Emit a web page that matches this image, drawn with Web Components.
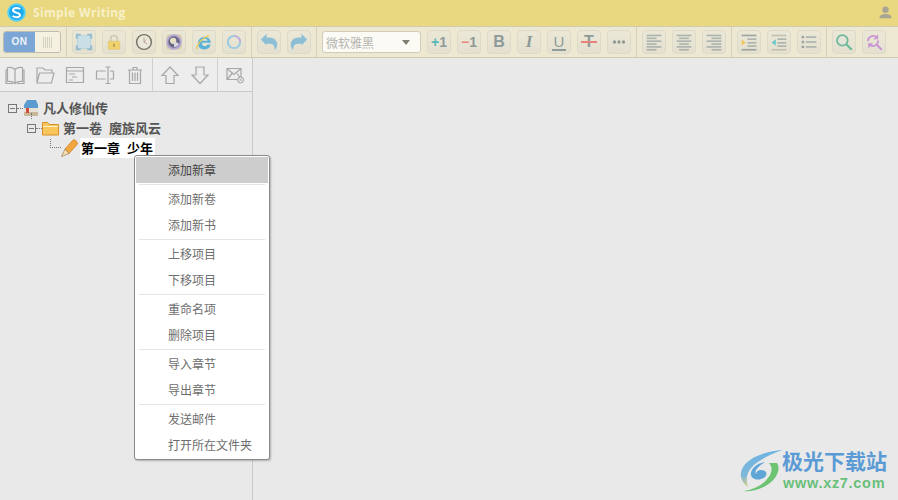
<!DOCTYPE html>
<html>
<head>
<meta charset="utf-8">
<style>
  html, body { margin: 0; height: 100%; background: #e9e9e9; overflow: hidden; }
  sw-app { font-family: "Liberation Sans", "Noto Sans CJK SC", sans-serif; }
</style>
</head>
<body>
<sw-app>
  <sw-titlebar slot="title">Simple Writing</sw-titlebar>
  <sw-toolbar slot="toolbar"></sw-toolbar>
  <sw-sidebar slot="side"></sw-sidebar>
  <sw-menu slot="over"></sw-menu>
  <sw-watermark slot="over"></sw-watermark>
</sw-app>
<script>
const line = 'fill="none" stroke="#a5a8a5" stroke-width="1.2"';
const bar = (y, x, w, c) => `<rect x="${x}" y="${y}" width="${w}" height="2" fill="${c || '#9fa9a6'}"/>`;
const ICONS = {
  full: `<rect x="3" y="3" width="16" height="16" fill="#c3deeb"/><path d="M3 3h16v16H3z" fill="none" stroke="#8fbdd6" stroke-dasharray="1 1"/><path d="M1 1h6v2.500H3.500V7H1zM15 1h6v6h-2.500V3.500H15zM1 15h2.500v3.500H7V21H1zM18.500 15H21v6h-6v-2.500h3.500z" fill="#86b5d0"/>`,
  lock: `<path d="M7 11V7a4 4 0 0 1 8 0v4" fill="none" stroke="#c9c3a8" stroke-width="2"/><rect x="4" y="10" width="14" height="10" rx="1" fill="#f3cf5a" stroke="#d8b444" stroke-width=".6"/><rect x="10" y="13" width="2" height="4" fill="#a8862a"/>`,
  clock: `<circle cx="11" cy="11" r="9" fill="#eeeadb" stroke="#5f5c53" stroke-width="1.800"/><path d="M11 11V5.500M11 11l4 2.500" stroke="#8a877d" stroke-width="1"/><path d="M11 11l3-3" stroke="#d26a5c" stroke-width=".7"/>`,
  media: `<rect x="1.500" y="1.500" width="19" height="19" rx="3" fill="#d9cfa4"/><circle cx="11" cy="11" r="9.500" fill="#a99bd6"/><circle cx="11" cy="11" r="7" fill="#4f4c72"/><circle cx="10" cy="9.500" r="3.800" fill="#e8e1c4"/><path d="M11 11.500a6 6 0 0 1 6 1.500 6 6 0 0 1-6 4z" fill="#d5d6e6"/>`,
  ie: `<path d="M3.500 13a8 8 0 1 1 16-1H8.800a3.400 3.400 0 0 0 6.400 2.200h4A8 8 0 0 1 3.500 13zm5.300-3.500h6.600a3.400 3.400 0 0 0-6.600 0z" fill="#3fa8d8" fill-rule="evenodd"/><path d="M2.500 20c-1.500-3 4-13 15-17" fill="none" stroke="#efc83f" stroke-width="1.600"/>`,
  ring: `<circle cx="11" cy="11" r="7.500" fill="none" stroke="#86c4e4" stroke-width="2.400"/><path d="M11 3.500a7.500 7.500 0 0 1 7.500 7.500" fill="none" stroke="#bba6dc" stroke-width="2.400"/>`,
  undo: `<path d="M1 8l7-7v4.500h3.500c6 0 9.500 4 9.500 8.500 0 3-1.300 5.500-3 7.500.6-5-1.600-8.500-6-8.500H8V15z" fill="#79b8d6"/>`,
  redo: `<path d="M21 8l-7-7v4.500h-3.500c-6 0-9.500 4-9.500 8.500 0 3 1.300 5.500 3 7.500-.6-5 1.600-8.500 6-8.500H14V15z" fill="#79b8d6"/>`,
  more: `<circle cx="5.500" cy="11" r="2" fill="#7f8785"/><circle cx="11" cy="11" r="2" fill="#7f8785"/><circle cx="16.500" cy="11" r="2" fill="#7f8785"/>`,
  left: [2,5.500,9,12.500,16,19.500].map((y,i)=>bar(y,2,i%2?12:18)).join(''),
  center: [2,5.500,9,12.500,16,19.500].map((y,i)=>bar(y,i%2?5:2,i%2?12:18)).join(''),
  right: [2,5.500,9,12.500,16,19.500].map((y,i)=>bar(y,i%2?8:2,i%2?12:18)).join(''),
  indent: bar(2,2,18,'#8c9694')+bar(6.500,9,11)+bar(11,9,11)+bar(15,9,11)+bar(19.500,2,18,'#8c9694')+`<path d="M2 7.500l5 4-5 4z" fill="#f0c14a"/>`,
  outdent: bar(2,2,18,'#b9b7a6')+bar(6.500,9,11)+bar(11,9,11)+bar(15,9,11)+bar(19.500,2,18,'#b9b7a6')+`<path d="M7 7.500l-5 4 5 4z" fill="#4cc0c8"/>`,
  list: `<rect x="2" y="3.500" width="3" height="3" fill="#8c9694"/><rect x="2" y="9.500" width="3" height="3" fill="#8c9694"/><rect x="2" y="15.500" width="3" height="3" fill="#8c9694"/>`+bar(4,7,13)+bar(10,7,13)+bar(16,7,13),
  find: `<circle cx="9" cy="9" r="6.500" fill="#e4e6da" stroke="#55b08f" stroke-width="2.200"/><path d="M14 14l6.500 6.500" stroke="#55b08f" stroke-width="2.800"/>`,
  replace: `<path d="M3.500 10a6.500 6.500 0 0 1 11-4.500M16 9a6.500 6.500 0 0 1-11 5" fill="none" stroke="#c485d4" stroke-width="2.200"/><path d="M16 1.500v6h-6zM4 18.500v-6h6z" fill="#c485d4"/><path d="M14 14l6.500 6.500" stroke="#c485d4" stroke-width="2.400"/>`,
  book: `<path d="M10 4.500C8 2.500 5 2 2.500 2.500v14c2.500-.5 5.500 0 7.500 2 2-2 5-2.500 7.500-2v-14C15 2 12 2.500 10 4.500zv14M2.500 5H1v13.500h7M17.500 5H19v13.500h-7" ${line}/>`,
  folder: `<path d="M2 18V3h6l2 2h7v3M2 18l2.500-10H19l-2.500 10z" ${line}/>`,
  panel: `<path d="M1.500 2.500h17v15h-17zM1.500 6h17M4 9h6M7 12h5M4 15h4" ${line}/>`,
  rename: `<path d="M10.500 6H1.500v8h9M15 6h3.500v8H15M10.500 2h5M10.500 18.500h5M13 2v16.500" ${line}/>`,
  trash: `<path d="M3 5h14M8 5V2.500h4V5M4.500 5v13.500h11V5M7.500 7.500v8.500M10 7.500v8.500M12.500 7.500v8.500" ${line}/>`,
  up: `<path d="M10 2L18 10.500h-4v8H6v-8H2z" ${line}/>`,
  down: `<path d="M10 18.500L18 10h-4V2H6v8H2z" ${line}/>`,
  mail: `<path d="M2 3.500h14v11H2zM2 3.500l7 6 7-6M2 14.500l5-6M16 14l-4-5.500" ${line}/><circle cx="15.500" cy="15" r="3" fill="#e9e9e9" stroke="#a3a6a3"/><path d="M14 13.500l3 3M17 13.500l-3 3" stroke="#a3a6a3" stroke-width=".8"/>`
};

class SwApp extends HTMLElement {
  constructor() {
    super();
    this.attachShadow({ mode: "open" });
  }
  connectedCallback() {
    this.shadowRoot.innerHTML = `
      <style>
        :host { display: flex; flex-direction: column; position: relative; width: 898px; height: 500px; overflow: hidden; }
        .body { flex: 1; display: flex; min-height: 0; }
        .main { flex: 1; background: #e9e9e9; }
      </style>
      <slot name="title"></slot>
      <slot name="toolbar"></slot>
      <div class="body">
        <slot name="side"></slot>
        <div class="main"></div>
      </div>
      <slot name="over"></slot>
    `;
  }
}

class SwTitlebar extends HTMLElement {
  constructor() {
    super();
    this.attachShadow({ mode: "open" });
  }
  connectedCallback() {
    this.shadowRoot.innerHTML = `
      <style>
        :host { display: flex; align-items: center; height: 26px; box-sizing: border-box; background: #e9d87f; padding: 0 5px 1px 7px; }
        .name { margin-left: 7px; font: bold 12px "Open Sans", sans-serif; letter-spacing: .35px; color: #f7f0c8; flex: 1; }
        svg { display: block; }
      </style>
      <svg width="19" height="19" viewBox="0 0 19 19">
        <circle cx="9.500" cy="9.500" r="9.300" fill="#4fd0f6"/>
        <circle cx="9.500" cy="9.500" r="7.300" fill="#1fa9ea"/>
        <path d="M13 6.200C12 4.800 6.500 4.300 6 7.200c-.4 2.800 7.200 2 7 5-.2 2.600-6 2.500-7.300.6" fill="none" stroke="#fff" stroke-width="2"/>
      </svg>
      <span class="name"><slot></slot></span>
      <svg width="15" height="15" viewBox="0 0 16 16"><circle cx="8" cy="5" r="3.400" fill="#a9a594"/><path d="M1.500 14c0-3.500 3-4.500 6.500-4.500s6.500 1 6.500 4.500z" fill="#a9a594"/></svg>
    `;
  }
}

class SwBtn extends HTMLElement {
  constructor() {
    super();
    this.attachShadow({ mode: "open" });
  }
  connectedCallback() {
    const icon = ICONS[this.getAttribute("icon")] || "";
    this.shadowRoot.innerHTML = `
      <style>
        :host { display: flex; align-items: center; justify-content: center; position: relative; box-sizing: border-box; width: 24px; height: 24px; border: 1px solid #dedac8; border-radius: 4px; background: linear-gradient(#ece8d8, #e3e0d0); font: bold 14px "Liberation Sans", sans-serif; color: #8e9a98; }
        svg { display: block; width: 18px; height: 18px; opacity: .82; }
      </style>
      ${icon ? `<svg viewBox="0 0 22 22">${icon}</svg>` : ""}<slot></slot>
    `;
  }
}

class SwToolbar extends HTMLElement {
  constructor() {
    super();
    this.attachShadow({ mode: "open" });
  }
  connectedCallback() {
    const btns = (list) => list.map((n) => `<sw-btn icon="${n}"></sw-btn>`).join("");
    this.shadowRoot.innerHTML = `
      <style>
        :host { display: flex; align-items: center; height: 32px; box-sizing: border-box; background: #ede8d1; border-top: 1px solid #cfcab2; border-bottom: 1px solid #cfcab2; font-family: "Noto Sans CJK SC", sans-serif; }
        .g { display: flex; align-items: center; gap: 6px; height: 100%; padding: 0 5px; border-right: 1px solid #d3cfb9; }
        .g:first-child { padding-right: 6px; }
        .g:last-child { border-right: 0; }
        .toggle { display: flex; width: 58px; height: 22px; box-sizing: border-box; margin-left: -2px; border: 1px solid #bdbcae; border-radius: 3px; overflow: hidden; }
        .on { width: 31px; background: #7ba6d6; color: #eef3f7; font: bold 10px/20px "Liberation Sans", sans-serif; letter-spacing: .5px; text-align: center; }
        .off { flex: 1; background: #f4f1e3; display: flex; align-items: center; justify-content: center; }
        .off i { width: 9px; height: 11px; background: repeating-linear-gradient(90deg, #d5d2c0 0 1px, transparent 1px 2px); }
        .sel { display: flex; align-items: center; justify-content: space-between; box-sizing: border-box; width: 99px; height: 22px; padding: 0 10px 0 3px; border: 1px solid #cfccb9; border-radius: 3px; background: #fbfaf5; font-size: 12px; color: #b5b5b0; }
        .sel i { width: 0; height: 0; border: 4px solid transparent; border-top: 5px solid #817e72; border-bottom: 0; }
        .plus { color: #56b7b4; }
        .minus { color: #e8887c; }
        .bold { font: bold 16px "Liberation Sans", sans-serif; }
        .ital { font: italic bold 17px "Liberation Serif", serif; }
        .und { font: 15px/15px "Liberation Sans", sans-serif; border-bottom: 2px solid #8e9a98; padding: 0 2px; }
        .str { font: bold 16px "Liberation Sans", sans-serif; }
        .str::after { content: ""; position: absolute; left: 3px; right: 3px; top: 10px; height: 2px; background: #e8827a; }
      </style>
      <div class="g"><div class="toggle"><div class="on">ON</div><div class="off"><i></i></div></div></div>
      <div class="g">${btns(["full","lock","clock","media","ie","ring"])}</div>
      <div class="g">${btns(["undo","redo"])}</div>
      <div class="g">
        <div class="sel">微软雅黑<i></i></div>
        <sw-btn><span class="plus">+</span>1</sw-btn>
        <sw-btn><span class="minus">−</span>1</sw-btn>
        <sw-btn><span class="bold">B</span></sw-btn>
        <sw-btn><span class="ital">I</span></sw-btn>
        <sw-btn><span class="und">U</span></sw-btn>
        <sw-btn><span class="str">T</span></sw-btn>
        ${btns(["more"])}
      </div>
      <div class="g">${btns(["left","center","right"])}</div>
      <div class="g">${btns(["indent","outdent","list"])}</div>
      <div class="g">${btns(["find","replace"])}</div>
    `;
  }
}

class SwSidebar extends HTMLElement {
  constructor() {
    super();
    this.attachShadow({ mode: "open" });
  }
  connectedCallback() {
    const tool = (n) => `<svg width="20" height="20" viewBox="0 0 20 20">${ICONS[n]}</svg>`;
    this.shadowRoot.innerHTML = `
      <style>
        :host { display: flex; flex-direction: column; box-sizing: border-box; width: 253px; border-right: 1px solid #c9c9c9; background: #e9e9e9; }
        .tools { display: flex; height: 34px; box-sizing: border-box; border-bottom: 1px solid #c9c9c9; background: #ededed; }
        .g { display: flex; align-items: center; gap: 10px; padding: 0 7px; border-right: 1px solid #cfcfcf; }
        .g:first-child { padding-left: 5px; }
        .g:last-child { border-right: 0; }
        svg { display: block; }
      </style>
      <div class="tools">
        <div class="g">${["book","folder","panel","rename","trash"].map(tool).join("")}</div>
        <div class="g">${["up","down"].map(tool).join("")}</div>
        <div class="g">${tool("mail")}</div>
      </div>
      <sw-tree></sw-tree>
    `;
  }
}

class SwTree extends HTMLElement {
  constructor() {
    super();
    this.attachShadow({ mode: "open" });
  }
  connectedCallback() {
    const box = `<span class="box"></span><span class="dash"></span>`;
    this.shadowRoot.innerHTML = `
      <style>
        :host { display: block; padding: 6px 0 0 8px; font: bold 13px/20px "Noto Sans CJK SC", sans-serif; color: #555; }
        .row { display: flex; align-items: center; height: 20px; position: relative; }
        .box { width: 9px; height: 9px; box-sizing: border-box; border: 1px solid #777; position: relative; }
        .box::after { content: ""; position: absolute; left: 1px; right: 1px; top: 3px; height: 1px; background: #777; }
        .dash { width: 6px; border-top: 1px dotted #777; }
        svg { display: block; margin-right: 4px; }
        .gap { display: inline-block; width: 7px; }
        .r2 { padding-left: 19px; }
        .r3 { padding-left: 42px; color: #000; }
        .r3 .bent { width: 11px; height: 9px; margin-top: -9px; border-left: 1px dotted #777; border-bottom: 1px dotted #777; box-sizing: border-box; }
        .r3 .sel { background: #fff; padding: 0 2px 0 1px; margin-left: 2px; }
        .vert { position: absolute; left: 23px; top: -5px; height: 6px; border-left: 1px dotted #777; }
      </style>
      <div class="row">${box}
        <svg width="16" height="18" viewBox="0 0 16 18"><rect x="1" y="12" width="14" height="5" rx="1" fill="#c9b79a"/><rect x="1" y="8" width="14" height="5" fill="#e8e2d4"/><rect x="3" y="8" width="3" height="6" fill="#d24a3a"/><path d="M4 1h9l2 5v3H1V6z" fill="#5c9bd0"/></svg>
        <span>凡人修仙传</span></div>
      <div class="row r2"><span class="vert"></span>${box}
        <svg width="17" height="15" viewBox="0 0 17 15"><path d="M.5 14V1.500h5l2 2h9V14z" fill="#f8c65a" stroke="#d8902a"/><rect x="1" y="5" width="15" height="1" fill="#fff3c8"/></svg>
        <span>第一卷<i class="gap"></i>魔族风云</span></div>
      <div class="row r3"><span class="bent"></span>
        <svg width="17" height="18" viewBox="0 0 17 18" style="margin-right:0"><path d="M4 10L12 1c1.500-1 4.500 1.500 4.500 4L8 14.500z" fill="#f2a63e" stroke="#c77a20" stroke-width=".7"/><path d="M4 10l4 4.500-7.500 3z" fill="#f6dfb0" stroke="#8a6a3a" stroke-width=".6"/></svg>
        <span class="sel">第一章<i class="gap"></i>少年</span></div>
    `;
  }
}

class SwMenu extends HTMLElement {
  constructor() {
    super();
    this.attachShadow({ mode: "open" });
  }
  connectedCallback() {
    const groups = [["添加新章"],["添加新卷","添加新书"],["上移项目","下移项目"],["重命名项","删除项目"],["导入章节","导出章节"],["发送邮件","打开所在文件夹"]];
    this.shadowRoot.innerHTML = `
      <style>
        :host { display: block; position: absolute; left: 134px; top: 155px; width: 136px; height: 305px; box-sizing: border-box; padding: 1px; background: #fff; border: 1px solid #8a8a8a; border-radius: 3px; box-shadow: 1px 1px 2px rgba(0,0,0,.25); font: 12px/26px "Noto Sans CJK SC", sans-serif; color: #6e6e6e; }
        .i { height: 26px; padding-left: 32px; }
        .i.on { background: #cdcdcd; color: #444; }
        hr { margin: 1px 3px 1px; border: 0; height: 1px; background: #e6e6e6; }
      </style>
      ${groups.map((g, gi) => g.map((t) => `<div class="i${gi === 0 ? " on" : ""}">${t}</div>`).join("")).join("<hr>")}
    `;
  }
}

class SwWatermark extends HTMLElement {
  constructor() {
    super();
    this.attachShadow({ mode: "open" });
  }
  connectedCallback() {
    this.shadowRoot.innerHTML = `
      <style>
        :host { display: flex; align-items: flex-start; position: absolute; left: 739px; top: 445px; }
        .t { display: flex; flex-direction: column; align-items: flex-start; }
        .a { font: bold 21px/30px "Noto Sans CJK SC", sans-serif; color: #5b9bd5; white-space: nowrap; margin-left: -1px; }
        .b { font: bold 14.500px/17px "Liberation Sans", sans-serif; letter-spacing: .7px; color: #69c07a; white-space: nowrap; }
        svg { display: block; margin-top: 4px; }
      </style>
      <svg width="44" height="44" viewBox="0 0 44 44">
        <defs><linearGradient id="sw" x1="0" y1="0" x2="0" y2="1"><stop offset="0" stop-color="#6db3e2"/><stop offset=".7" stop-color="#7fb8d8"/><stop offset="1" stop-color="#d8d07a"/></linearGradient></defs>
        <path d="M44 1C28 2 8 8 3 20 0 27 3 34 9 38 6 30 8 22 16 15 24 9 34 4 44 1z" fill="url(#sw)"/>
        <path d="M38 14c4 6 0 16-10 22C20 41 10 43 5 42c9-1 19-6 24-13 4-5 5-11 1-15z" fill="#6cc472"/>
        <path d="M26 13C18 14 11 20 12 26c1 5 9 6 14 2 3-3 1-7-4-7-3 0-5 2-5 4-2-4 3-8 9-12z" fill="#5fa6d8"/>
      </svg>
      <div class="t"><div class="a">极光下载站</div><div class="b">www.xz7.com</div></div>
    `;
  }
}

customElements.define("sw-btn", SwBtn);
customElements.define("sw-toolbar", SwToolbar);
customElements.define("sw-titlebar", SwTitlebar);
customElements.define("sw-tree", SwTree);
customElements.define("sw-sidebar", SwSidebar);
customElements.define("sw-menu", SwMenu);
customElements.define("sw-watermark", SwWatermark);
customElements.define("sw-app", SwApp);
</script>
</body>
</html>
